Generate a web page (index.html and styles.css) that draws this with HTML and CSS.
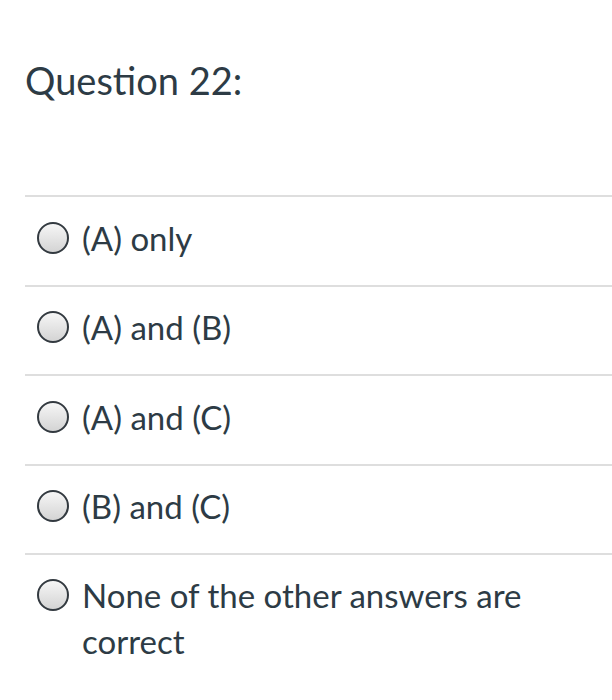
FILE: index.html
```html
<!DOCTYPE html>
<html>
<head>
<meta charset="utf-8">
<link rel="stylesheet" href="styles.css">
</head>
<body>
<div class="question">
  <h1 class="title">Question 22:</h1>
  <ul class="answers">
    <li class="answer"><span class="radio"></span><span class="label">(A) only</span></li>
    <li class="answer"><span class="radio"></span><span class="label">(A) and (B)</span></li>
    <li class="answer"><span class="radio"></span><span class="label">(A) and (C)</span></li>
    <li class="answer"><span class="radio"></span><span class="label">(B) and (C)</span></li>
    <li class="answer multi"><span class="radio"></span><span class="label">None of the other answers are correct</span></li>
  </ul>
</div>
</body>
</html>
```

FILE: styles.css
```css
html, body {
  margin: 0;
  padding: 0;
  background: #ffffff;
}
body {
  font-family: Lato, "Open Sans", sans-serif;
  color: #2d3b45;
  width: 612px;
  height: 700px;
  overflow: hidden;
}
.question {
  padding-left: 25px;
}
.title {
  margin: 0;
  padding-top: 56px;
  height: 195px;
  box-sizing: border-box;
  font-size: 38px;
  font-weight: 400;
  line-height: 48px;
}
.answers {
  list-style: none;
  margin: 0;
  padding: 0;
}
.answer {
  display: flex;
  align-items: center;
  border-top: 2px solid #dedede;
  height: 89.5px;
  box-sizing: border-box;
  padding-left: 12px;
  padding-bottom: 6px;
}
.answer.multi {
  align-items: flex-start;
  height: auto;
  padding-top: 17px;
  padding-right: 60px;
}
.radio {
  flex: none;
  width: 28px;
  height: 28px;
  border: 2.5px solid #333a40;
  border-radius: 50%;
  background: linear-gradient(#f6f6f6, #d4d4d4);
  margin-right: 13px;
}
.multi .radio {
  margin-top: 7px;
}
.label {
  font-size: 33px;
  line-height: 46px;
}
```
